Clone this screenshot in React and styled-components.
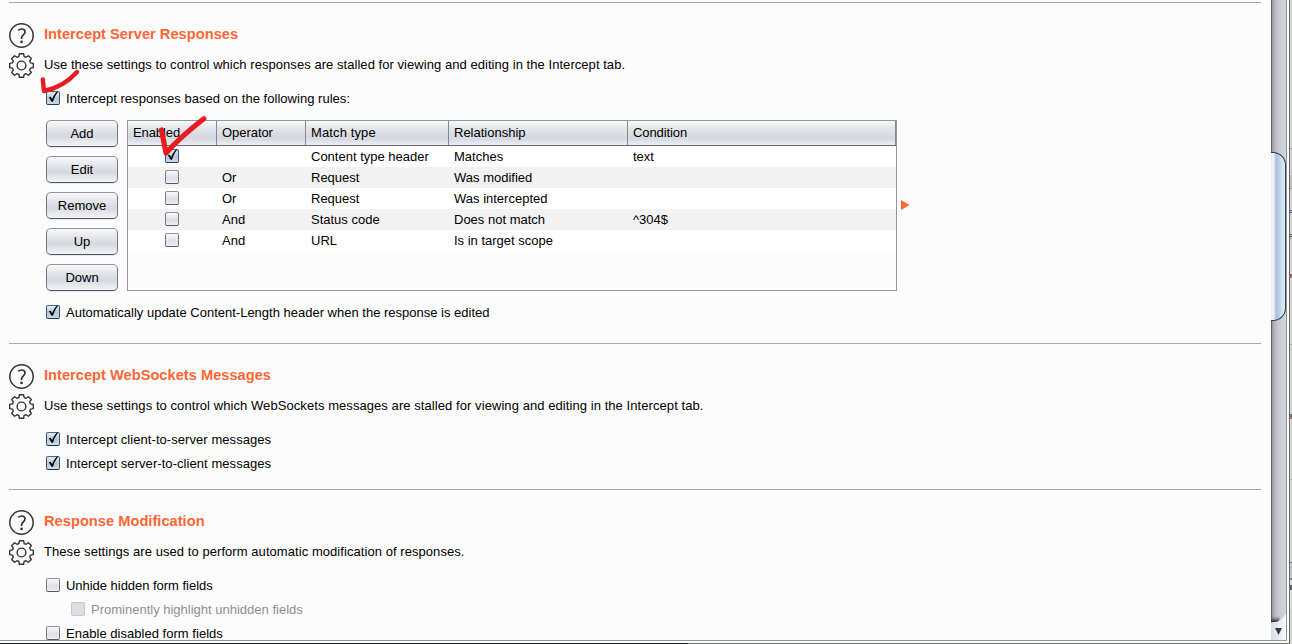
import React from 'react';
import styled, { createGlobalStyle, css } from 'styled-components';

const GlobalStyle = createGlobalStyle`
  * { box-sizing: border-box; }
  html, body { margin: 0; height: 644px; overflow: hidden; background: #fcfcfc; }
  body { font: 13px/16px "Liberation Sans", Arial, sans-serif; color: #000; }
`;

const Window = styled.div`
  position: relative;
  display: flex;
  width: 1292px;
  height: 644px;
  overflow: hidden;
`;

const Main = styled.div`
  display: flex;
  flex-direction: column;
  width: 1289px;
  height: 644px;
  background: #fff;
`;

const Body = styled.div`
  display: flex;
  width: 1287px;
  height: 641px;
  border-right: 1px solid #8f93a2;
  border-bottom: 1px solid #8f96a5;
  background: #fcfcfc;
`;

const BottomEdge = styled.div`
  height: 3px;
  padding-top: 2px;
  background: #fff;
  &::after {
    content: '';
    display: block;
    height: 1px;
    background: linear-gradient(90deg, #172224 688px, #77736f 688px);
  }
`;

const Page = styled.main`
  width: 1271px;
  height: 640px;
  padding: 2px 10px 0 9px;
  overflow: hidden;
`;

const Section = styled.section`
  display: flex;
  gap: 9px;
  height: ${(p) => p.$height}px;
  padding-top: 20px;
  border-top: 1px solid #a3a6b3;
`;

const IconColumn = styled.div`
  display: flex;
  flex-direction: column;
  gap: 5px;
  width: 25px;
  flex: none;
  svg { display: block; }
`;

const Content = styled.div`
  flex: 1;
  padding-top: 3px;
`;

const Title = styled.h2`
  margin: 0 0 15px 1px;
  font-size: 14.67px;
  line-height: 16px;
  font-weight: bold;
  letter-spacing: ${(p) => p.$spacing}px;
  color: #ff6633;
`;

const Description = styled.p`
  margin: 0 0 18px 1px;
  line-height: 16px;
  letter-spacing: ${(p) => p.$spacing}px;
`;

const CheckLine = styled.label`
  display: flex;
  align-items: center;
  gap: 6px;
  height: 14px;
  margin-left: ${(p) => (p.$nested ? 28 : 3)}px;
  margin-bottom: 10px;
  letter-spacing: ${(p) => p.$spacing || 0}px;
  color: ${(p) => (p.$nested ? '#8e8f93' : '#000')};
  white-space: nowrap;
`;

const CheckText = styled.span`
  padding-top: 2px;
`;

const Box = styled.span`
  display: block;
  flex: none;
  width: 14px;
  height: 14px;
  border: 1px solid;
  border-color: #90939b #777a84 #555b67;
  border-radius: 2px;
  background: linear-gradient(#fafafb, #dddfe5 60%, #eceef2);
  ${(p) => p.$checked && css`
    border-color: #4d6479 #3d556c #24394e;
    background: linear-gradient(#e4edf5, #b3c8da 55%, #c5d9e8);
  `}
  ${(p) => p.$disabled && css`
    border-color: #c6c8cf;
    background: #dcdee4;
  `}
  svg { display: block; margin: -2px 0 0 -1px; overflow: visible; }
`;

const RulesArea = styled.div`
  display: flex;
  align-items: flex-start;
  margin: 15px 0 14px 3px;
`;

const ButtonColumn = styled.div`
  display: flex;
  flex-direction: column;
  gap: 9px;
  width: 72px;
  margin-right: 9px;
`;

const Button = styled.button`
  height: 27px;
  padding: 1px 0 0;
  border: 1px solid;
  border-color: #92959d #747780 #50545d;
  border-radius: 5px;
  background: linear-gradient(#f8f8fa 0%, #e3e5e9 35%, #d5d8df 60%, #e3e5ea 78%, #f3f4f7 100%);
  box-shadow: 0 1px 0 #e4e5e9;
  color: #000;
  font: 13px/16px "Liberation Sans", Arial, sans-serif;
`;

const Table = styled.div`
  width: 770px;
  height: 171px;
  border: 1px solid #9094a4;
`;

const columns = '89px 89px 143px 179px 1fr';

const HeaderRow = styled.div`
  display: grid;
  grid-template-columns: ${columns};
  height: 25px;
  border-bottom: 1px solid #656a78;
  background: linear-gradient(#fafafb 0%, #e4e6ea 30%, #d5d8df 65%, #dadde5 80%, #eceef5 100%);
`;

const HeaderCell = styled.div`
  padding: 4px 0 0 5px;
  border-right: 1px solid #858994;
  letter-spacing: ${(p) => p.$spacing}px;
`;

const Row = styled.div`
  display: grid;
  grid-template-columns: ${columns};
  height: 21px;
  background: ${(p) => (p.$striped ? '#f2f2f2' : '#fff')};
`;

const Cell = styled.div`
  padding: 3px 0 0 5px;
`;

const CheckCell = styled.div`
  padding: 3px 0 0 37px;
`;

const Arrow = styled.svg`
  margin: 80px 0 0 4px;
`;

const ScrollTrack = styled.div`
  display: flex;
  flex-direction: column;
  justify-content: space-between;
  width: 15px;
  height: 640px;
  padding-top: 152px;
  border-left: 1px solid #606065;
  background: linear-gradient(90deg, #97979c, #b7b8bd 20%, #c9cad0 45%, #d3d4da);
`;

const Thumb = styled.div`
  height: 169px;
  margin-left: -1px;
  border: 1px solid #263f57;
  border-left: 0;
  border-radius: 0 13px 13px 0;
  background: linear-gradient(90deg, #e3eaf2 0, #f4f7fb 2px, #e8eef5 3px, #aabfd8 5px, #b9d0e5 8px, #d2e8f5 12px, #d9f3fb);
`;

const ScrollButton = styled.svg`
  display: block;
  margin-left: -1px;
`;

const Neighbour = styled.aside`
  display: flex;
  flex-direction: column;
  width: 3px;
  height: 644px;
  border-left: 1px solid #66656a;
  background: #d7d5d2;
`;

const Strip = styled.div`
  flex: none;
  height: ${(p) => p.$h}px;
  background: ${(p) => p.$c || 'transparent'};
`;

const Marks = styled.svg`
  position: absolute;
  left: 0;
  top: 0;
  pointer-events: none;
`;

const HelpIcon = () => (
  <svg width="25" height="25" viewBox="0 0 25 25" fill="none" stroke="#333">
    <circle cx="12.5" cy="12.5" r="11.7" strokeWidth="1.5" />
    <path d="M9.2 7.4C10.3 6.4 11.5 6 12.7 6C14.7 6 16 7.1 16 8.9C16 11.7 12.5 12.2 12.5 15.2V16" strokeWidth="1.7" />
    <circle cx="12.5" cy="18.9" r="1.3" fill="#333" stroke="none" />
  </svg>
);

const GearIcon = () => (
  <svg width="25" height="25" viewBox="0 0 25 25" fill="none" stroke="#333" strokeWidth="1.4" strokeLinejoin="round">
    <path d="M10.4 .7H14.6L15.1 3.5L17.1 4.3L19.4 2.7L22.3 5.6L20.7 7.9L21.5 9.9L24.3 10.4V14.6L21.5 15.1L20.7 17.1L22.3 19.4L19.4 22.3L17.1 20.7L15.1 21.5L14.6 24.3H10.4L9.9 21.5L7.9 20.7L5.6 22.3L2.7 19.4L4.3 17.1L3.5 15.1L.7 14.6V10.4L3.5 9.9L4.3 7.9L2.7 5.6L5.6 2.7L7.9 4.3L9.9 3.5Z" />
    <circle cx="12.5" cy="12.5" r="4.4" />
  </svg>
);

const CheckBox = ({ checked, disabled }) => (
  <Box $checked={checked} $disabled={disabled}>
    {checked && (
      <svg width="14" height="14" viewBox="0 0 14 14">
        <path d="M2.8 7.2L4.8 6.7L6.1 9.2C7.3 6 8.8 3.5 11.3 1.2L12 1.9C9.6 4.7 8.2 7.8 7 11.8H5.6Z" fill="#000" />
      </svg>
    )}
  </Box>
);

const Option = ({ checked, nested, spacing, children }) => (
  <CheckLine $nested={nested} $spacing={spacing}>
    <CheckBox checked={checked} disabled={nested} />
    <CheckText>{children}</CheckText>
  </CheckLine>
);

const SettingsSection = ({ height, title, titleSpacing, text, textSpacing, children }) => (
  <Section $height={height}>
    <IconColumn>
      <HelpIcon />
      <GearIcon />
    </IconColumn>
    <Content>
      <Title $spacing={titleSpacing}>{title}</Title>
      <Description $spacing={textSpacing}>{text}</Description>
      {children}
    </Content>
  </Section>
);

const rules = [
  [true, '', 'Content type header', 'Matches', 'text'],
  [false, 'Or', 'Request', 'Was modified', ''],
  [false, 'Or', 'Request', 'Was intercepted', ''],
  [false, 'And', 'Status code', 'Does not match', '^304$'],
  [false, 'And', 'URL', 'Is in target scope', ''],
];

const headers = [
  ['Enabled', -0.1],
  ['Operator', -0.05],
  ['Match type', 0.12],
  ['Relationship', 0],
  ['Condition', -0.1],
];

const strips = [
  [148], [1, '#a3a2a5'], [26, '#d3d1d0'], [13, '#bfbec2'], [1, '#a5a5aa'], [21],
  [1, '#44536b'], [1, '#b7c2d0'], [1, '#44536b'], [21],
  [1, '#44536b'], [1, '#b7c2d0'], [1, '#44536b'], [3, '#bfbec2'], [34],
  [2, '#626a7c'], [2, '#b96f50'], [66], [1, '#a3a2a5'], [69],
  [3, '#5b7087'], [2, '#a9744e'], [60], [1, '#aeadae'], [82],
  [1, '#77787c'], [15, '#c4c4ca'], [2, '#8b8b91'], [5, '#e1e0de'], [5, '#5d5e66'], [20, '#dfddda'],
];

export default function App() {
  return (
    <>
      <GlobalStyle />
      <Window>
        <Main>
          <Body>
            <Page>
              <SettingsSection
                height={341}
                title="Intercept Server Responses"
                titleSpacing={0.01}
                text="Use these settings to control which responses are stalled for viewing and editing in the Intercept tab."
                textSpacing={0.05}
              >
                <Option checked spacing={0.03}>Intercept responses based on the following rules:</Option>
                <RulesArea>
                  <ButtonColumn>
                    <Button>Add</Button>
                    <Button>Edit</Button>
                    <Button>Remove</Button>
                    <Button>Up</Button>
                    <Button>Down</Button>
                  </ButtonColumn>
                  <Table>
                    <HeaderRow>
                      {headers.map(([label, spacing]) => (
                        <HeaderCell key={label} $spacing={spacing}>{label}</HeaderCell>
                      ))}
                    </HeaderRow>
                    {rules.map(([enabled, ...values], i) => (
                      <Row key={i} $striped={i % 2 === 1}>
                        <CheckCell><CheckBox checked={enabled} /></CheckCell>
                        {values.map((value, j) => <Cell key={j}>{value}</Cell>)}
                      </Row>
                    ))}
                  </Table>
                  <Arrow width="9" height="10" viewBox="0 0 9 10">
                    <path d="M0 0L8.5 5L0 10Z" fill="#ff6633" />
                  </Arrow>
                </RulesArea>
                <Option checked>Automatically update Content-Length header when the response is edited</Option>
              </SettingsSection>

              <SettingsSection
                height={146}
                title="Intercept WebSockets Messages"
                titleSpacing={0}
                text="Use these settings to control which WebSockets messages are stalled for viewing and editing in the Intercept tab."
                textSpacing={0.07}
              >
                <Option checked spacing={0.06}>Intercept client-to-server messages</Option>
                <Option checked spacing={0.06}>Intercept server-to-client messages</Option>
              </SettingsSection>

              <SettingsSection
                height={180}
                title="Response Modification"
                titleSpacing={0.01}
                text="These settings are used to perform automatic modification of responses."
                textSpacing={0.06}
              >
                <Option spacing={-0.03}>Unhide hidden form fields</Option>
                <Option nested>Prominently highlight unhidden fields</Option>
                <Option spacing={0.03}>Enable disabled form fields</Option>
              </SettingsSection>
            </Page>
            <ScrollTrack>
              <Thumb />
              <ScrollButton width="15" height="30" viewBox="0 0 15 30">
                <defs>
                  <linearGradient id="shade" x1="0" y1="0" x2="0" y2="1">
                    <stop offset="0" stopColor="#55565b" stopOpacity="0" />
                    <stop offset="1" stopColor="#2e2f33" />
                  </linearGradient>
                  <linearGradient id="face" x1="0" y1="0" x2="1" y2="0">
                    <stop offset="0" stopColor="#d9dce1" />
                    <stop offset="1" stopColor="#f8f9fa" />
                  </linearGradient>
                </defs>
                <path d="M0 6H9L8 12H0Z" fill="url(#shade)" />
                <path d="M0 12.5C8 12.5 11 9 15 4V30H0Z" fill="url(#face)" />
                <path d="M4 18H11L7.5 25Z" fill="#333a42" />
              </ScrollButton>
            </ScrollTrack>
          </Body>
          <BottomEdge />
        </Main>
        <Neighbour>
          {strips.map(([h, c], i) => <Strip key={i} $h={h} $c={c} />)}
        </Neighbour>
        <Marks width="220" height="160" fill="none" stroke="#e81c20" strokeLinecap="round" strokeLinejoin="round">
          <path d="M42.8 79.5L44 91C57 88.5 68 82 77 72" strokeWidth="4.4" />
          <path d="M161.5 130L166 153C175 143 188 131 203.8 118.8" strokeWidth="5.2" />
        </Marks>
      </Window>
    </>
  );
}
